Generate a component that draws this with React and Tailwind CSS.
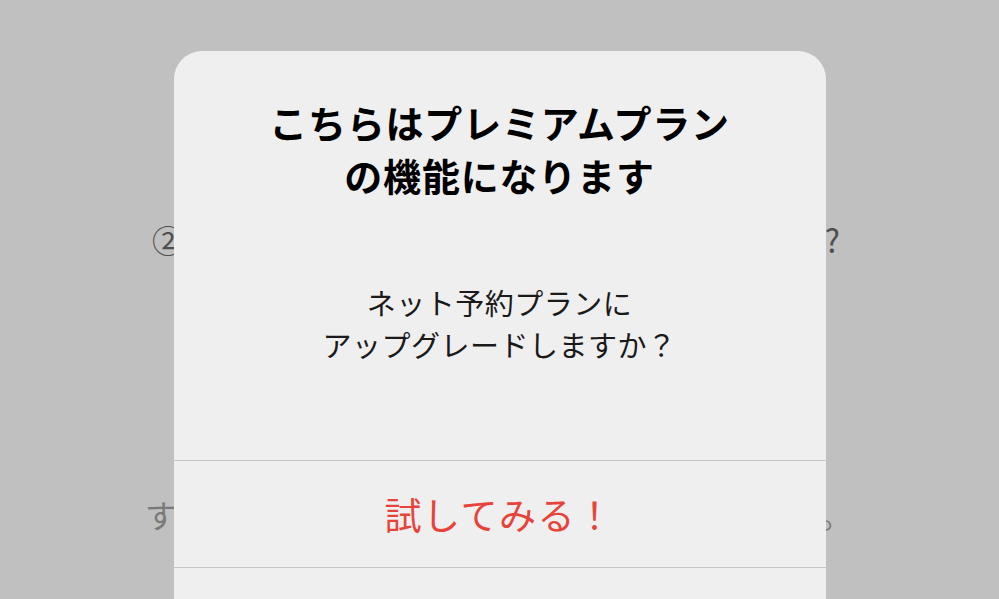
export default function App() {
  return (
    <div
      className="relative h-[599px] w-[999px] overflow-hidden bg-[#c0c0c0]"
      style={{ fontFamily: '"Noto Sans CJK JP", "Noto Sans", sans-serif' }}
    >
      {/* page behind the dialog */}
      <div className="flex flex-col">
        <div className="mt-[217px] flex h-[44px] items-center justify-between pl-[152px] pr-[159px] text-[32px] leading-[44px] text-[#4f4f4f]">
          <span>②</span>
          <span>?</span>
        </div>
        <div className="mt-[231px] flex h-[44px] items-center justify-between pl-[145px] pr-[147px] text-[32px] leading-[44px] text-[#7a7a7a]">
          <span>す</span>
          <span>。</span>
        </div>
      </div>

      {/* dialog overlay */}
      <div className="absolute inset-0 flex justify-center pt-[51px]">
        <div className="flex h-[640px] w-[652px] flex-col rounded-[28px] bg-[#efefef]">
          <div className="flex h-[409px] flex-col items-center pt-[44px]">
            <h1 className="text-center text-[38px] font-bold leading-[53px] tracking-[0.8px] text-black">
              こちらはプレミアムプラン
              <br />
              の機能になります
            </h1>
            <p className="mt-[80px] text-center text-[29px] font-normal leading-[42px] tracking-[0.5px] text-[#1a1a1a]">
              ネット予約プランに
              <br />
              アップグレードしますか？
            </p>
          </div>
          <div className="h-px bg-[#c6c6c6]" />
          <button className="flex h-[106px] items-center justify-center text-[37px] leading-[50px] tracking-[1.5px] text-[#e8433a]">
            試してみる！
          </button>
          <div className="h-px bg-[#c6c6c6]" />
          <div className="flex-1" />
        </div>
      </div>
    </div>
  );
}
